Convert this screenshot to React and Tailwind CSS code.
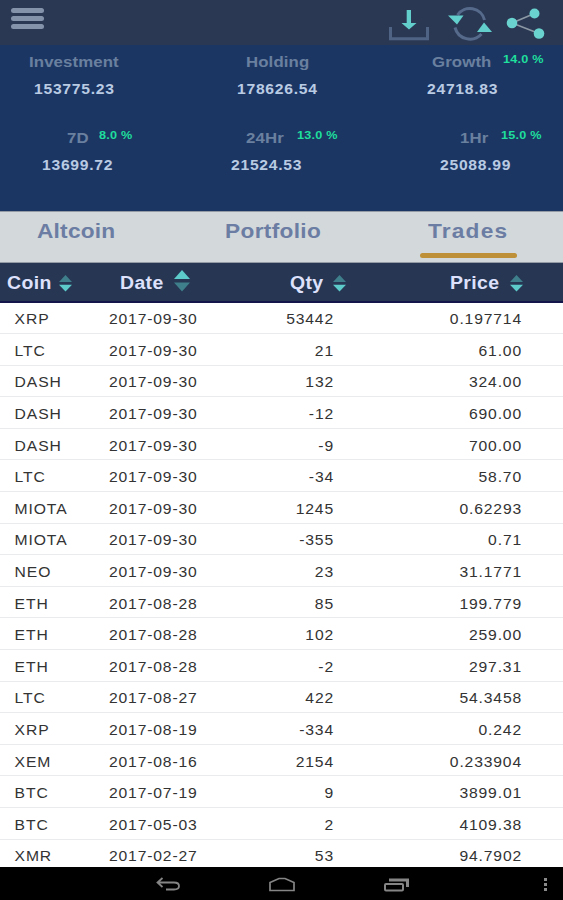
import React, { useState } from "react";

const stats = [
  [
    {
      label: "Investment",
      value: "153775.23",
      labelClass: "ml-[29px] w-[90px]",
      valueClass: "ml-[34px]",
    },
    {
      label: "Holding",
      value: "178626.54",
      labelClass: "ml-[56px] w-[60px]",
      valueClass: "ml-[47px]",
    },
    {
      label: "Growth",
      value: "24718.83",
      percent: "14.0 %",
      labelClass: "ml-[52px] w-[71px]",
      valueClass: "ml-[47px]",
    },
  ],
  [
    {
      label: "7D",
      value: "13699.72",
      percent: "8.0 %",
      labelClass: "ml-[67px] w-[32px]",
      valueClass: "ml-[42px]",
    },
    {
      label: "24Hr",
      value: "21524.53",
      percent: "13.0 %",
      labelClass: "ml-[56px] w-[51px]",
      valueClass: "ml-[41px]",
    },
    {
      label: "1Hr",
      value: "25088.99",
      percent: "15.0 %",
      labelClass: "ml-[80px] w-[41px]",
      valueClass: "ml-[60px]",
    },
  ],
];

const trades = [
  ["XRP", "2017-09-30", "53442", "0.197714"],
  ["LTC", "2017-09-30", "21", "61.00"],
  ["DASH", "2017-09-30", "132", "324.00"],
  ["DASH", "2017-09-30", "-12", "690.00"],
  ["DASH", "2017-09-30", "-9", "700.00"],
  ["LTC", "2017-09-30", "-34", "58.70"],
  ["MIOTA", "2017-09-30", "1245", "0.62293"],
  ["MIOTA", "2017-09-30", "-355", "0.71"],
  ["NEO", "2017-09-30", "23", "31.1771"],
  ["ETH", "2017-08-28", "85", "199.779"],
  ["ETH", "2017-08-28", "102", "259.00"],
  ["ETH", "2017-08-28", "-2", "297.31"],
  ["LTC", "2017-08-27", "422", "54.3458"],
  ["XRP", "2017-08-19", "-334", "0.242"],
  ["XEM", "2017-08-16", "2154", "0.233904"],
  ["BTC", "2017-07-19", "9", "3899.01"],
  ["BTC", "2017-05-03", "2", "4109.38"],
  ["XMR", "2017-02-27", "53", "94.7902"],
];

const tabs = [
  { name: "Altcoin", className: "ml-[37px] w-[188px] tracking-[0.2px]" },
  { name: "Portfolio", className: "w-[203px] tracking-[0.3px]" },
  { name: "Trades", className: "w-[100px] tracking-[1.1px]" },
];

const SortIcon = ({ active }) => (
  <svg
    width={active ? 16 : 13}
    height={active ? 22 : 17}
    viewBox="0 0 16 22"
    preserveAspectRatio="none"
    className="shrink-0"
  >
    <path d="M8 0 L16 9 H0 Z" fill={active ? "#5ccbca" : "#3f7f8c"} />
    <path d="M0 12.5 H16 L8 21.5 Z" fill={active ? "#3f7f8c" : "#5ccbca"} />
  </svg>
);

const TopBar = () => (
  <header className="h-[45px] bg-[#2a3854] flex items-start">
    <button className="ml-[11px] mt-[7.5px] w-[33px] flex flex-col gap-[3.2px]">
      <span className="h-[5px] w-full rounded-full bg-[#8493a9]" />
      <span className="h-[5px] w-full rounded-full bg-[#8493a9]" />
      <span className="h-[5px] w-full rounded-full bg-[#8493a9]" />
    </button>
    <div className="ml-auto mr-[17px] flex">
      {/* Download */}
      <svg width="40" height="45" viewBox="0 0 40 45" fill="none">
        <path d="M1.5 27 V38.7 H38.5 V27" stroke="#4f6384" strokeWidth="3" />
        <path
          d="M17.7 10 H22 V23 H27.5 L20 29.5 L12.5 23 H17.7 Z"
          fill="#63cfcd"
        />
      </svg>
      {/* Refresh */}
      <svg
        width="44"
        height="45"
        viewBox="0 0 44 45"
        fill="none"
        className="ml-[19px]"
      >
        <path d="M9.5 15 A15 15 0 0 1 36.5 20" stroke="#566a8b" strokeWidth="3" />
        <path d="M7 27.5 A15.5 15.5 0 0 0 33.5 34" stroke="#566a8b" strokeWidth="3" />
        <path d="M0 15.5 H15.5 L9 24.5 Z" fill="#63cfcd" />
        <path d="M36 22.5 L44 32 H29 Z" fill="#63cfcd" />
      </svg>
      {/* Share */}
      <svg
        width="40"
        height="45"
        viewBox="0 0 40 45"
        fill="none"
        className="ml-[14px]"
      >
        <path
          d="M28.5 13.5 L6 23 L33 33.5"
          stroke="#8c98a4"
          strokeWidth="1.6"
        />
        <circle cx="6" cy="23" r="5.3" fill="#6ad3d0" />
        <circle cx="28.5" cy="13.5" r="5" fill="#6ad3d0" />
        <circle cx="33" cy="33.5" r="5.3" fill="#6ad3d0" />
      </svg>
    </div>
  </header>
);

const Stat = ({ stat }) => (
  <div>
    <div className="flex h-[27px] items-center">
      <div className={stat.labelClass}>
        <span className="inline-block origin-left scale-x-[1.12] text-[15px] font-bold leading-[27px] tracking-[0.1px] text-[#6a809f]">
          {stat.label}
        </span>
      </div>
      {stat.percent && (
        <span className="mb-1 origin-left scale-x-[1.15] whitespace-nowrap text-[11px] font-bold tracking-[0.2px] text-[#1fdf9c]">
          {stat.percent}
        </span>
      )}
    </div>
    <div className={stat.valueClass}>
      <span className="inline-block origin-left scale-x-[1.12] text-[14px] font-bold leading-[29px] tracking-[0.65px] text-[#b9cbe3]">
        {stat.value}
      </span>
    </div>
  </div>
);

const HeadCell = ({ title, className, iconClass, active }) => (
  <div className={className}>
    <span className="inline-block w-fit origin-left scale-x-[1.08] pt-[2px] text-[18px] font-bold tracking-[0.35px] text-[#dde1fb]">
      {title}
    </span>
    <div className={iconClass}>
      <SortIcon active={active} />
    </div>
  </div>
);

const NavBar = () => (
  <footer className="h-[33px] shrink-0 bg-black">
    <div className="flex h-full items-center pt-[2px]">
      <svg
        width="26"
        height="16"
        viewBox="0 0 26 16"
        fill="none"
        stroke="#858585"
        strokeWidth="1.8"
        className="ml-[156px]"
      >
        <path d="M6.5 1 L1.5 5.5 L6.5 10 M1.5 5.5 H18 Q23 5.5 23 9 Q23 12.5 18 12.5 H10" />
      </svg>
      <svg
        width="26"
        height="16"
        viewBox="0 0 26 16"
        fill="none"
        stroke="#858585"
        strokeWidth="1.7"
        className="ml-[87px]"
      >
        <path d="M1 13.5 V5.5 L10 1.5 H16 L25 5.5 V13.5 Z" />
      </svg>
      <svg
        width="26"
        height="16"
        viewBox="0 0 26 16"
        fill="none"
        stroke="#858585"
        className="ml-[89px]"
      >
        <rect x="1" y="7" width="18" height="6.5" rx="1" strokeWidth="2" />
        <path d="M5 3 H23.5 V10" strokeWidth="3" />
      </svg>
      <div className="ml-auto mr-[16px] flex flex-col gap-[2px]">
        <span className="h-[3px] w-[3px] bg-[#8a8a8a]" />
        <span className="h-[3px] w-[3px] bg-[#8a8a8a]" />
        <span className="h-[3px] w-[3px] bg-[#8a8a8a]" />
      </div>
    </div>
  </footer>
);

const App = () => {
  const [activeTab, setActiveTab] = useState("Trades");

  return (
    <div className="flex h-[900px] w-[563px] flex-col overflow-hidden bg-white font-['Liberation_Sans',Arial,sans-serif]">
      <TopBar />

      {/* Summary */}
      <section className="h-[166px] shrink-0 bg-[#1c3664] pt-[3px]">
        {stats.map((row, i) => (
          <div key={i} className="grid h-[76px] grid-cols-[190px_190px_183px]">
            {row.map((stat) => (
              <Stat key={stat.label} stat={stat} />
            ))}
          </div>
        ))}
      </section>

      {/* Tabs */}
      <nav className="flex h-[52px] shrink-0 border-y border-[#949ba5] bg-[#d3d8db]">
        {tabs.map((tab) => (
          <div key={tab.name} className={tab.className}>
            <button
              onClick={() => setActiveTab(tab.name)}
              className="block origin-left scale-x-[1.08] pt-[4px] text-[21px] font-bold leading-[30px] text-[#6b7da3]"
            >
              {tab.name}
            </button>
            {activeTab === tab.name && (
              <div className="-ml-[8px] mt-[7px] h-[5px] w-[97px] rounded-sm bg-[#be9038]" />
            )}
          </div>
        ))}
      </nav>

      {/* Table header */}
      <div className="flex h-[40px] shrink-0 items-center border-b-2 border-[#14154a] bg-[#263653]">
        <HeadCell
          title="Coin"
          className="flex w-[113px] items-center pl-[7px]"
          iconClass="ml-[11px] mt-[3px]"
        />
        <HeadCell
          title="Date"
          active
          className="flex w-[170px] items-center pl-[7px]"
          iconClass="ml-[14px] -mt-[3px]"
        />
        <HeadCell
          title="Qty"
          className="flex w-[160px] items-center pl-[7px]"
          iconClass="ml-[12px] mt-[3px]"
        />
        <HeadCell
          title="Price"
          className="flex items-center pl-[7px]"
          iconClass="ml-[14px] mt-[3px]"
        />
      </div>

      {/* Trades */}
      <div className="-mt-[0.6px] min-h-0 flex-1 overflow-hidden text-[14px] text-[#333333]">
        {trades.map(([coin, date, qty, price], i) => (
          <div
            key={i}
            className="grid h-[31.6px] grid-cols-[109px_110px_115px_188px] items-center border-b border-[#e9ebec] pt-[4px]"
          >
            <span className="origin-left scale-x-[1.12] pl-[13px] tracking-[0.8px]">
              {coin}
            </span>
            <span className="origin-left scale-x-[1.12] tracking-[0.75px]">
              {date}
            </span>
            <span className="origin-right scale-x-[1.12] text-right tracking-[0.75px]">
              {qty}
            </span>
            <span className="origin-right scale-x-[1.12] text-right tracking-[0.75px]">
              {price}
            </span>
          </div>
        ))}
      </div>

      <NavBar />
    </div>
  );
};

export default App;
